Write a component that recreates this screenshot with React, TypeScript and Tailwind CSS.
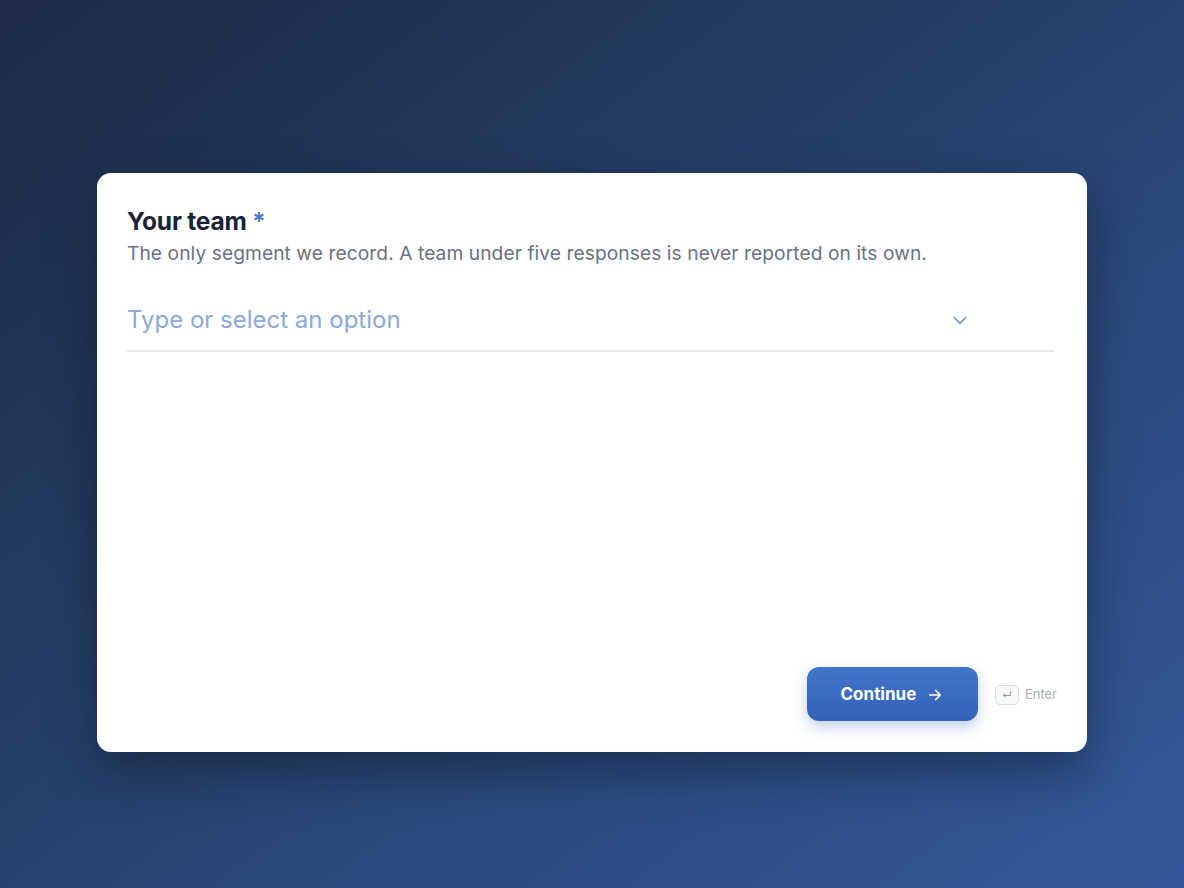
import React from "react";

export default function App() {
  return (
    <div
      className="w-full h-[888px] flex justify-center pt-[173px] bg-gradient-to-br from-[#1c2a45] via-[#27426f] to-[#33599c]"
      style={{ fontFamily: "Inter, 'Noto Sans', sans-serif" }}
    >
      <div className="w-[990px] h-[579px] bg-white rounded-[14px] shadow-[0_20px_50px_rgba(0,0,0,0.35)] flex flex-col pl-[30px] pr-[33px] pt-[32px] pb-[31px]">
        <h1 className="text-[24.5px] leading-[32px] font-bold text-[#1a2233] tracking-[-0.2px]">
          Your team <span className="text-[#4677cc] font-semibold">*</span>
        </h1>
        <p className="mt-[2px] text-[19.2px] leading-[28px] text-[#6b7280] tracking-[0.07px]">
          The only segment we record. A team under five responses is never reported on its own.
        </p>
        <div className="mt-[27px] flex items-center border-b-2 border-[#e5e7eb] h-[58px] pb-[4px]">
          <input
            className="flex-1 outline-none bg-transparent text-[24px] text-[#1a2233] placeholder:text-[#8ba9d9]"
            placeholder="Type or select an option"
          />
          <svg width="20" height="20" viewBox="0 0 24 24" fill="none" stroke="#6f93cf" strokeWidth="2" strokeLinecap="round" strokeLinejoin="round" className="mr-[84px]">
            <path d="M5 9l7 7 7-7" />
          </svg>
        </div>
        <div className="flex-1" />
        <div className="flex items-center justify-end gap-[17px] -mr-[3px]">
          <button className="w-[171px] h-[54px] rounded-[12px] bg-gradient-to-b from-[#4275cc] to-[#3462b8] text-white text-[17px] font-bold flex items-center justify-center gap-[10px] pt-[2px] shadow-[0_6px_14px_rgba(52,98,184,0.3)]">
            Continue
            <svg width="18" height="18" viewBox="0 0 24 24" fill="none" stroke="white" strokeWidth="2.2" strokeLinecap="round" strokeLinejoin="round">
              <path d="M5 12h14M13 6l6 6-6 6" />
            </svg>
          </button>
          <div className="flex items-center gap-[6px] text-[13px] text-[#a8adb6] pt-[2px]">
            <span className="w-[24px] h-[20px] rounded-[5px] border border-[#d9dce1] bg-[#f7f8fa] flex items-center justify-center text-[10px] text-[#8a8f98]">↵</span>
            Enter
          </div>
        </div>
      </div>
    </div>
  );
}
